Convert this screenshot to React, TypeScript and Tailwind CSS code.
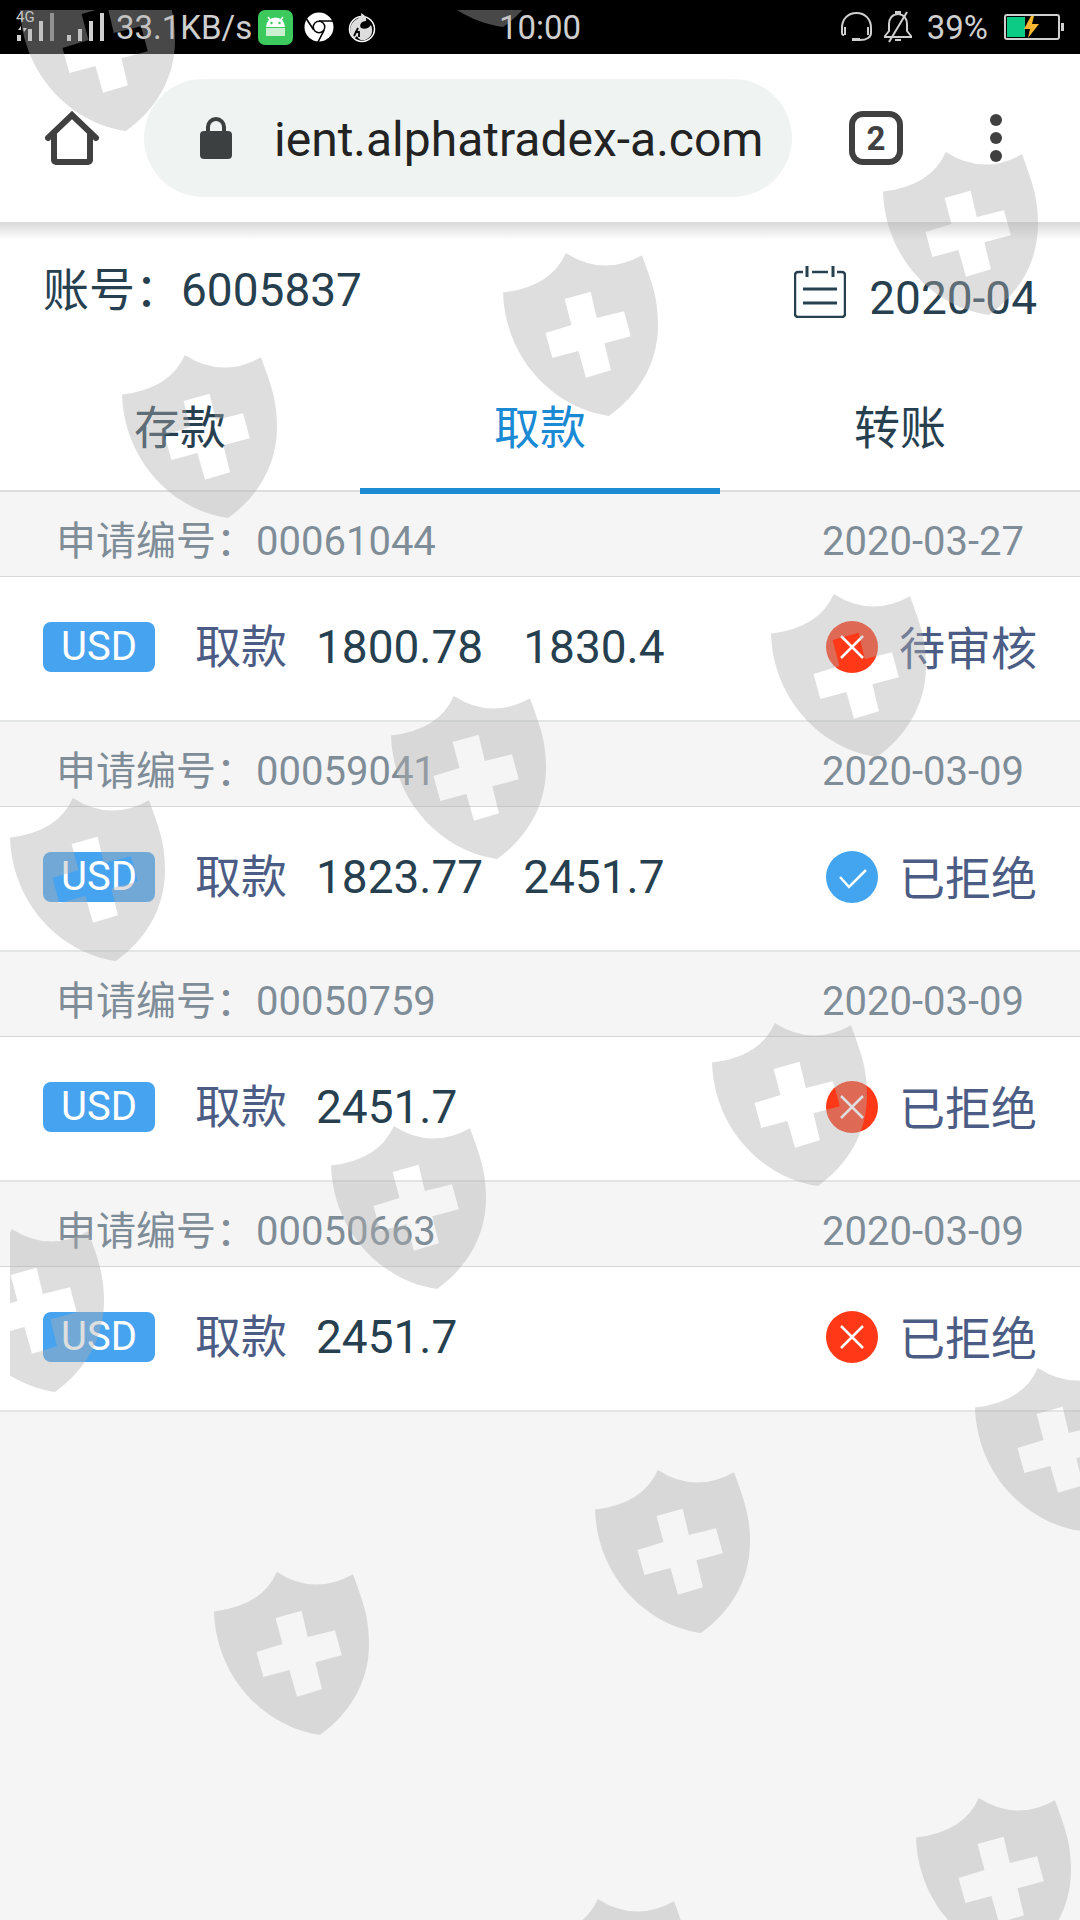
type TRecord = {
   id: string;
   date: string;
   amounts: string[];
   status: string;
   success: boolean;
};

const records: TRecord[] = [
   {
      id: "00061044",
      date: "2020-03-27",
      amounts: ["1800.78", "1830.4"],
      status: "待审核",
      success: false,
   },
   {
      id: "00059041",
      date: "2020-03-09",
      amounts: ["1823.77", "2451.7"],
      status: "已拒绝",
      success: true,
   },
   {
      id: "00050759",
      date: "2020-03-09",
      amounts: ["2451.7"],
      status: "已拒绝",
      success: false,
   },
   {
      id: "00050663",
      date: "2020-03-09",
      amounts: ["2451.7"],
      status: "已拒绝",
      success: false,
   },
];

const tabs = ["存款", "取款", "转账"];

// x, y of every shield in the watermark layer
const shields = [
   [10, -42],
   [387, -146],
   [873, 142],
   [493, 243],
   [112, 345],
   [761, 584],
   [381, 686],
   [0, 788],
   [702, 1013],
   [321, 1116],
   [-61, 1219],
   [965, 1358],
   [585, 1460],
   [204, 1562],
   [906, 1788],
   [525, 1889],
];

const Signal = () => (
   <svg width="88" height="28" viewBox="0 0 88 28" fill="#cfcfcf">
      <path d="M0 22h4v6H0zM11 16h4v12h-4zM22 8h4v20h-4z" />
      <path d="M33 0h4v28h-4z" fill="#7d7d7d" />
      <path d="M50 22h4v6h-4zM61 16h4v12h-4zM72 8h4v20h-4zM83 0h4v28h-4z" />
      <path d="M1 17l3-4v4zM6 15h4l-3 4z" />
   </svg>
);

const AndroidIcon = () => (
   <svg width="35" height="35" viewBox="0 0 35 35">
      <rect width="35" height="35" rx="7" fill="#3cc95d" />
      <path d="M8 17a9.500 9.500 0 0 1 19 0z" fill="#fff" />
      <path d="M10 7l3 4M25 7l-3 4" stroke="#fff" strokeWidth="1.500" />
      <path d="M8 18h19v8H8z" fill="#c9f0d1" />
      <circle cx="13.500" cy="13" r="1.200" fill="#3cc95d" />
      <circle cx="21.500" cy="13" r="1.200" fill="#3cc95d" />
   </svg>
);

const ChromeIcon = () => (
   <svg width="30" height="30" viewBox="0 0 30 30">
      <circle cx="15" cy="15" r="14.500" fill="#fff" />
      <circle cx="15" cy="15" r="6.500" fill="#000" />
      <circle cx="15" cy="15" r="5" fill="#fff" />
      <path
         d="M15 9h14M9.800 18L2.500 7M20.200 18L14 30"
         stroke="#000"
         strokeWidth="1.600"
      />
   </svg>
);

const BrowserIcon = () => (
   <svg width="28" height="32" viewBox="0 0 28 32">
      <circle cx="14" cy="18" r="12.500" fill="none" stroke="#fff" strokeWidth="1.500" />
      <path
         d="M13 2c4 2 6 5 5 8-5 0-7 4-5 7 4 2 8 0 10-3 3 7 0 13-6 15-4 1-7-1-8-4L6 28C0 22 1 12 9 8c3-2 5-3 4-6z"
         fill="#ddd"
      />
      <path d="M10 17l-4 8M7 21h4v5" stroke="#000" strokeWidth="1.800" fill="none" />
   </svg>
);

const HeadsetIcon = () => (
   <svg width="33" height="30" viewBox="0 0 33 30" fill="none" stroke="#cfcfcf" strokeWidth="2">
      <path d="M4 23H3a2 2 0 0 1-1-2v-5C2 7 8 1 16.500 1S31 7 31 16v5c0 4-4 7-11 7" />
      <path d="M5 15v8M28 15v8" />
      <path d="M12 27.500h8" strokeWidth="3" />
   </svg>
);

const BellOffIcon = () => (
   <svg width="30" height="32" viewBox="0 0 30 32" fill="none" stroke="#cfcfcf" strokeWidth="2">
      <path d="M15 3C9 3 6 8 6 13v7l-4 5v1h26v-1l-4-5v-7c0-5-3-10-9-10zM13 3V1h4v2M12 29h6" />
      <path d="M24 1L6 31" />
   </svg>
);

const BatteryIcon = () => (
   <svg width="60" height="32" viewBox="0 0 60 32">
      <rect x="1" y="4" width="54" height="24" rx="2" fill="none" stroke="#cfcfcf" strokeWidth="2" />
      <path d="M57 12h3v8h-3z" fill="#cfcfcf" />
      <path d="M3 6h18v20H3z" fill="#0ccb85" />
      <path d="M27 5l-7 13h6l-2 9 11-14h-7l2-8z" fill="#fdb62f" />
   </svg>
);

const HomeIcon = () => (
   <svg
      width="54"
      height="54"
      viewBox="0 0 54 54"
      fill="none"
      stroke="#404040"
      strokeWidth="6"
      strokeLinecap="round"
      strokeLinejoin="round"
   >
      <path d="M3 27L27 4l24 23" strokeLinejoin="miter" />
      <path d="M9 24v25a2 2 0 0 0 2 2h32a2 2 0 0 0 2-2V24" />
   </svg>
);

const LockIcon = () => (
   <svg width="32" height="42" viewBox="0 0 32 42" className="shrink-0">
      <rect y="14" width="32" height="28" rx="4" fill="#3c4040" />
      <path d="M8 15v-5a8 8 0 0 1 16 0v5" fill="none" stroke="#3c4040" strokeWidth="4" />
   </svg>
);

const CalendarIcon = () => (
   <svg width="52" height="52" viewBox="0 0 52 52" fill="none" stroke="#26404f" strokeWidth="2.500">
      <path d="M9 6H4a3 3 0 0 0-3 3v39a3 3 0 0 0 3 3h44a3 3 0 0 0 3-3V9a3 3 0 0 0-3-3h-5M18 6h16" />
      <path d="M13 0v11M39 0v11M9 23h34M9 37h34" strokeWidth="3" />
   </svg>
);

const StatusIcon = ({ success }: { success: boolean }) =>
   success ? (
      <svg width="52" height="52" viewBox="0 0 52 52" fill="none">
         <circle cx="26" cy="26" r="26" fill="#43a4f0" />
         <path d="M14 26l9 10 17-17" stroke="#fff" strokeWidth="2.500" />
      </svg>
   ) : (
      <svg width="52" height="52" viewBox="0 0 52 52" fill="none">
         <circle cx="26" cy="26" r="26" fill="#ff3817" />
         <path d="M15 15l22 22M37 15L15 37" stroke="#fff" strokeWidth="2.500" />
      </svg>
   );

const StatusBar = () => (
   <div className="grid h-[54px] grid-cols-[1fr_auto_1fr] items-center bg-black text-[33px] leading-none text-[#cfcfcf]">
      <div className="relative flex items-center pl-[17px]">
         <span className="absolute left-4 top-0 text-[15px] leading-none">4G</span>
         <Signal />
         <span className="ml-[11px] mr-[6px]">33.1KB/s</span>
         <AndroidIcon />
         <span className="ml-[11px] mr-[14px]">
            <ChromeIcon />
         </span>
         <BrowserIcon />
      </div>
      <span>10:00</span>
      <div className="flex items-center justify-end pr-4">
         <HeadsetIcon />
         <span className="ml-[10px] mr-[14px]">
            <BellOffIcon />
         </span>
         <span className="mr-4">39%</span>
         <BatteryIcon />
      </div>
   </div>
);

const BrowserBar = () => (
   <header className="flex h-[168px] items-center bg-white pl-[45px] pr-[78px]">
      <button type="button" aria-label="Home">
         <HomeIcon />
      </button>
      <div className="ml-[45px] flex h-[118px] min-w-0 flex-1 items-center rounded-full bg-[#eff4f3] pl-14">
         <LockIcon />
         <input
            type="text"
            aria-label="URL"
            defaultValue="ient.alphatradex-a.com"
            className="ml-[42px] min-w-0 flex-1 bg-transparent pt-1 text-[48px] text-[#232323] outline-none"
         />
      </div>
      <button
         type="button"
         className="ml-[57px] flex size-[54px] items-center justify-center rounded-[14px] border-6 border-[#404040] text-[33px] font-bold leading-none text-[#404040]"
      >
         2
      </button>
      <button type="button" aria-label="Menu" className="ml-[87px]">
         <svg width="12" height="48" viewBox="0 0 12 48" fill="#404040">
            <circle cx="6" cy="6" r="6" />
            <circle cx="6" cy="24" r="6" />
            <circle cx="6" cy="42" r="6" />
         </svg>
      </button>
   </header>
);

const RecordItem = ({ record }: { record: TRecord }) => (
   <li>
      <div className="flex h-[85px] items-center justify-between border-b border-[#d6d7d7] px-14 pt-4 text-[40px] leading-none text-[#7f8d98]">
         <span>申请编号：{record.id}</span>
         <span>{record.date}</span>
      </div>
      <div className="flex h-[145px] items-center border-b-2 border-[#e3e4e4] bg-white px-[43px] pb-[3px] text-[46px] leading-none text-[#26404f]">
         <span className="flex h-[50px] items-center rounded-lg bg-[#46a3f0] px-[18px] text-[40px] text-white">
            USD
         </span>
         <span className="ml-10 text-[#4c5d85]">取款</span>
         <div className="ml-[29px] flex gap-[40px]">
            {record.amounts.map((amount) => (
               <span key={amount}>{amount}</span>
            ))}
         </div>
         <div className="ml-auto flex items-center gap-[21px] text-[#4c5d85]">
            <StatusIcon success={record.success} />
            <span className="pt-[3px]">{record.status}</span>
         </div>
      </div>
   </li>
);

const Watermark = () => (
   <div className="pointer-events-none absolute bottom-0 left-[10px] right-0 top-[10px] overflow-hidden">
      <svg width="100%" height="100%" fill="#afafaf" fillOpacity="0.41" aria-hidden="true">
         {shields.map(([x, y]) => (
            <path
               key={`${x}-${y}`}
               transform={`translate(${x} ${y})`}
               fillRule="evenodd"
               d="M0 39.500Q48 34 62.800 0Q100 24 139 2.300C149 30 155 45 155 72C155 112 134 143 106 163C50 155 2 105 0 39.500ZM61.600 46L87.600 38.700L93.800 65L121 58.300L127.800 83.300L101.400 90.300L107.900 117.300L83 124.700L75.400 98L49.400 105L42.500 80L68.500 72Z"
            />
         ))}
      </svg>
   </div>
);

const App = () => {
   return (
      <div className="relative min-h-screen overflow-hidden bg-[#f5f5f5] font-['Roboto','Noto_Sans_CJK_SC',sans-serif]">
         <StatusBar />
         <BrowserBar />
         <main>
            <div className="bg-white text-[#26404f]">
               <div className="h-[18px] bg-linear-to-b from-[#d9d9d9] to-white"></div>
               <div className="flex h-[126px] items-start justify-between px-[43px] pt-[26px] text-[46px] leading-[48px]">
                  <span>账号：6005837</span>
                  <button type="button" className="flex items-start gap-[23px]">
                     <CalendarIcon />
                     <span className="pt-2">2020-04</span>
                  </button>
               </div>
               <div
                  role="tablist"
                  className="grid h-[126px] grid-cols-3 border-b-2 border-[#dcdddd] text-[46px] leading-none"
               >
                  {tabs.map((tab) => (
                     <button
                        key={tab}
                        type="button"
                        role="tab"
                        aria-selected={tab === "取款"}
                        className={
                           tab === "取款"
                              ? "relative h-[128px] border-b-6 border-[#1c8bd2] pt-[2px] text-[#1a8ad4]"
                              : "relative h-[128px] border-b-6 border-transparent pt-[2px]"
                        }
                     >
                        {tab}
                     </button>
                  ))}
               </div>
            </div>
            <ul>
               {records.map((record) => (
                  <RecordItem key={record.id} record={record} />
               ))}
            </ul>
         </main>
         <Watermark />
      </div>
   );
};

export default App;
